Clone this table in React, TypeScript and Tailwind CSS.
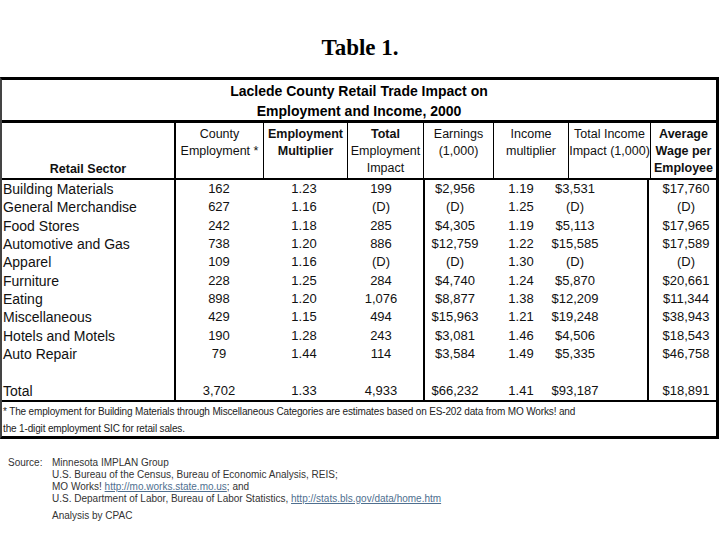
import React from "react";

type Row = {
  sector: string;
  county: string;
  mult: string;
  total: string;
  earnings: string;
  incMult: string;
  incImpact: string;
  wage: string;
};

const rows: Row[] = [
  { sector: "Building Materials", county: "162", mult: "1.23", total: "199", earnings: "$2,956", incMult: "1.19", incImpact: "$3,531", wage: "$17,760" },
  { sector: "General Merchandise", county: "627", mult: "1.16", total: "(D)", earnings: "(D)", incMult: "1.25", incImpact: "(D)", wage: "(D)" },
  { sector: "Food Stores", county: "242", mult: "1.18", total: "285", earnings: "$4,305", incMult: "1.19", incImpact: "$5,113", wage: "$17,965" },
  { sector: "Automotive and Gas", county: "738", mult: "1.20", total: "886", earnings: "$12,759", incMult: "1.22", incImpact: "$15,585", wage: "$17,589" },
  { sector: "Apparel", county: "109", mult: "1.16", total: "(D)", earnings: "(D)", incMult: "1.30", incImpact: "(D)", wage: "(D)" },
  { sector: "Furniture", county: "228", mult: "1.25", total: "284", earnings: "$4,740", incMult: "1.24", incImpact: "$5,870", wage: "$20,661" },
  { sector: "Eating", county: "898", mult: "1.20", total: "1,076", earnings: "$8,877", incMult: "1.38", incImpact: "$12,209", wage: "$11,344" },
  { sector: "Miscellaneous", county: "429", mult: "1.15", total: "494", earnings: "$15,963", incMult: "1.21", incImpact: "$19,248", wage: "$38,943" },
  { sector: "Hotels and Motels", county: "190", mult: "1.28", total: "243", earnings: "$3,081", incMult: "1.46", incImpact: "$4,506", wage: "$18,543" },
  { sector: "Auto Repair", county: "79", mult: "1.44", total: "114", earnings: "$3,584", incMult: "1.49", incImpact: "$5,335", wage: "$46,758" },
];

const blank: Row = { sector: "", county: "", mult: "", total: "", earnings: "", incMult: "", incImpact: "", wage: "" };
const totalRow: Row = { sector: "Total", county: "3,702", mult: "1.33", total: "4,933", earnings: "$66,232", incMult: "1.41", incImpact: "$93,187", wage: "$18,891" };

function DataRow({ r }: { r: Row }) {
  return (
    <div className="flex h-[18.33px] leading-[18.33px] text-[13px] text-[#111]">
      <div className="w-[172px] pl-[1px] whitespace-nowrap text-[14px]">{r.sector}</div>
      <div className="flex w-[249px] border-l-2 border-black">
        <span className="w-[86px] text-center">{r.county}</span>
        <span className="w-[84px] text-center">{r.mult}</span>
        <span className="w-[70px] text-center">{r.total}</span>
      </div>
      <div className="flex w-[224px] border-l-2 border-black">
        <span className="w-[60px] text-center">{r.earnings}</span>
        <span className="ml-[12px] w-[48px] text-center">{r.incMult}</span>
        <span className="w-[60px] text-center whitespace-nowrap">{r.incImpact}</span>
      </div>
      <div className="flex-1 border-l-2 border-black pl-[7px] text-center">{r.wage}</div>
    </div>
  );
}

export default function App() {
  return (
    <div className="w-[720px] h-[540px] bg-white font-['Liberation_Sans',Arial,sans-serif] text-black overflow-hidden">
      <div className="pt-[34px] h-[63px] text-center font-['Liberation_Serif',serif] font-bold text-[23px] leading-[28px]">
        Table 1.
      </div>

      <div className="mt-[14px] w-[719px] border-t-[3px] border-r-[3px] border-b-[3px] border-l-2 border-t-black border-r-black border-b-black border-l-[#444]">
        {/* title */}
        <div className="h-[43px] pt-[1px] text-center font-bold text-[14px] leading-[20px] border-b-[3px] border-black">
          <div>Laclede County Retail Trade Impact on</div>
          <div>Employment and Income, 2000</div>
        </div>

        {/* column headings */}
        <div className="grid grid-cols-[172px_89px_84px_76px_70px_75px_82px_1fr] h-[57px] border-b-2 border-black text-center text-[12.5px] leading-[17px] text-[#111]">
          <div className="flex items-end justify-center font-bold">Retail Sector</div>
          <div className="border-l-2 border-black pt-[3px]">County<br />Employment *</div>
          <div className="border-l border-black pt-[3px] font-bold">Employment<br />Multiplier</div>
          <div className="border-l border-black pt-[3px]"><span className="font-bold">Total</span><br />Employment<br />Impact</div>
          <div className="border-l border-black pt-[3px]">Earnings<br />(1,000)</div>
          <div className="border-l border-black pt-[3px]">Income<br />multiplier</div>
          <div className="border-l border-black pt-[3px] whitespace-nowrap">Total Income<br />Impact (1,000)</div>
          <div className="border-l border-black pt-[3px] font-bold">Average<br />Wage per<br />Employee</div>
        </div>

        {/* data */}
        <div className="border-b-2 border-black">
          {rows.map((r) => (
            <DataRow key={r.sector} r={r} />
          ))}
          <DataRow r={blank} />
          <DataRow r={totalRow} />
        </div>

        {/* footnote */}
        <div className="h-[34px] pt-[1px] pl-[1px] text-[10px] tracking-[-0.15px] leading-[17px] text-[#222] whitespace-nowrap">
          <div>* The employment for Building Materials through Miscellaneous Categories are estimates based on ES-202 data from MO Works! and</div>
          <div>the 1-digit employment SIC for retail sales.</div>
        </div>
      </div>

      {/* sources */}
      <div className="mt-[18px] flex text-[10px] leading-[12px] text-[#333]">
        <div className="w-[52px] pl-[8px]">Source:</div>
        <div>
          <div>Minnesota IMPLAN Group</div>
          <div>U.S. Bureau of the Census, Bureau of Economic Analysis, REIS;</div>
          <div>
            MO Works! <span className="underline text-[#4f6f8f]">http://mo.works.state.mo.us</span>; and
          </div>
          <div>
            U.S. Department of Labor, Bureau of Labor Statistics,{" "}
            <span className="underline text-[#4f6f8f]">http://stats.bls.gov/data/home.htm</span>
          </div>
          <div className="mt-[5px]">Analysis by CPAC</div>
        </div>
      </div>
    </div>
  );
}
